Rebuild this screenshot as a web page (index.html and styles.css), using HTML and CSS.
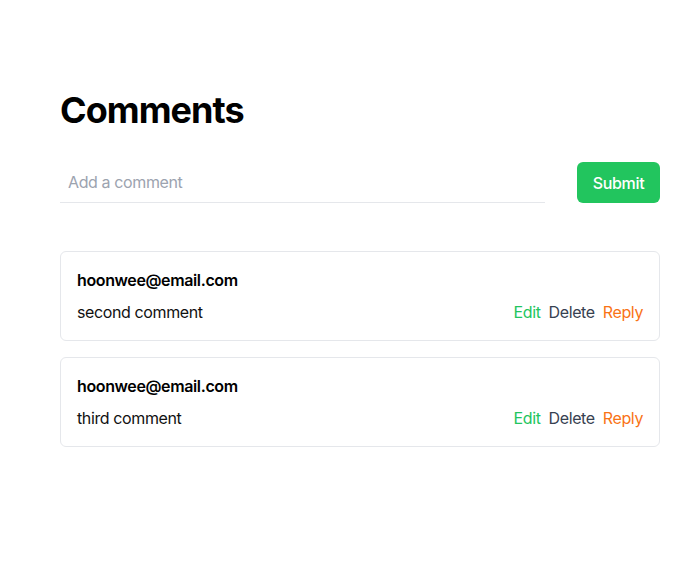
FILE: index.html
```html
<!DOCTYPE html>
<html>
<head>
<meta charset="utf-8">
<link rel="stylesheet" href="styles.css">
</head>
<body>
<main class="page">
  <h1 class="title">Comments</h1>
  <form class="comment-form">
    <input class="comment-input" type="text" placeholder="Add a comment">
    <button class="submit-btn" type="button">Submit</button>
  </form>
  <ul class="comment-list">
    <li class="comment-card">
      <div class="author">hoonwee@email.com</div>
      <div class="comment-row">
        <span class="comment-text">second comment</span>
        <span class="actions">
          <span class="act edit">Edit</span>
          <span class="act delete">Delete</span>
          <span class="act reply">Reply</span>
        </span>
      </div>
    </li>
    <li class="comment-card">
      <div class="author">hoonwee@email.com</div>
      <div class="comment-row">
        <span class="comment-text">third comment</span>
        <span class="actions">
          <span class="act edit">Edit</span>
          <span class="act delete">Delete</span>
          <span class="act reply">Reply</span>
        </span>
      </div>
    </li>
  </ul>
</main>
</body>
</html>
```

FILE: styles.css
```css
* { box-sizing: border-box; }
html, body { margin: 0; padding: 0; background: #fff; }
body {
  font-family: Inter, "Noto Sans", "Liberation Sans", sans-serif;
  color: #111;
  letter-spacing: -0.38px;
}
.page {
  width: 600px;
  margin: 0 0 0 60px;
  padding-top: 90px;
}
.title {
  margin: 0;
  font-size: 36px;
  line-height: 40px;
  font-weight: 700;
  color: #000;
  letter-spacing: -0.95px;
}
.comment-form {
  display: flex;
  align-items: center;
  gap: 32px;
  margin-top: 32px;
}
.comment-input {
  flex: 1;
  height: 41px;
  border: none;
  border-bottom: 1px solid #e5e7eb;
  padding: 0 8px;
  font-family: inherit;
  font-size: 16px;
  letter-spacing: -0.38px;
  color: #111;
  outline: none;
  background: transparent;
}
.comment-input::placeholder { color: #9ca3af; }
.submit-btn {
  height: 41px;
  width: 83px;
  border: none;
  border-radius: 6px;
  background: #22c55e;
  color: #fff;
  font-family: inherit;
  font-size: 16px;
  font-weight: 500;
  letter-spacing: -0.3px;
}
.comment-list {
  list-style: none;
  margin: 48px 0 0;
  padding: 0;
  display: flex;
  flex-direction: column;
  gap: 16px;
}
.comment-card {
  border: 1px solid #e5e7eb;
  border-radius: 6px;
  padding: 16px;
  display: flex;
  flex-direction: column;
  gap: 8px;
}
.author {
  font-size: 16px;
  line-height: 24px;
  font-weight: 600;
  color: #000;
}
.comment-row {
  display: flex;
  justify-content: space-between;
  align-items: center;
  font-size: 16px;
  line-height: 24px;
}
.comment-text { color: #111; }
.actions { display: flex; gap: 8px; }
.edit { color: #22c55e; }
.delete { color: #374151; }
.reply { color: #f97316; }
```
